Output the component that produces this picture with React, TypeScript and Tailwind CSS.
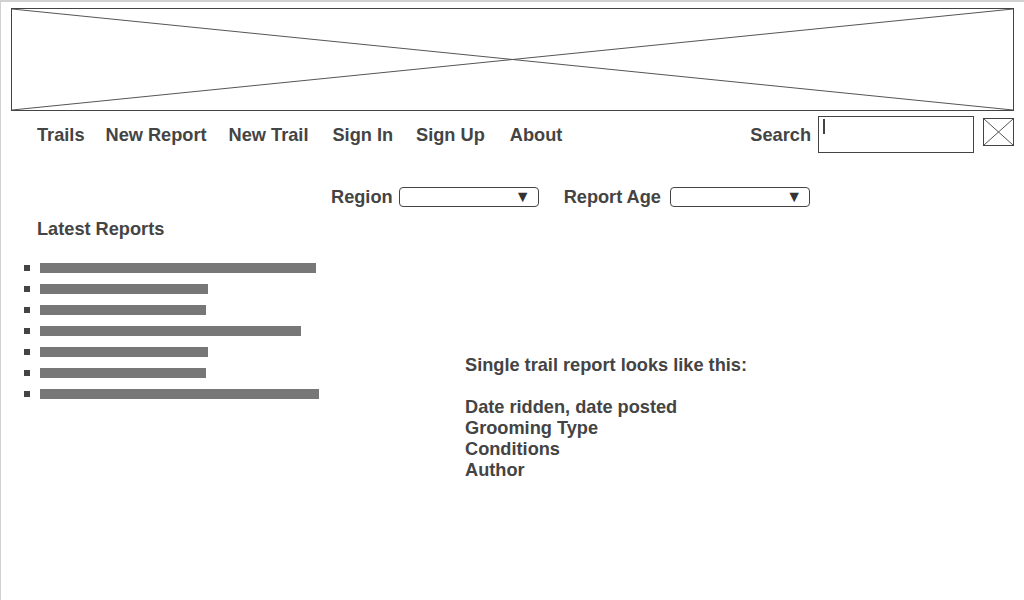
import React from "react";

const bars = [276, 168, 166, 261, 168, 166, 279];
const navItems: { label: string; ml: string }[] = [
  { label: "Trails", ml: "ml-[26px]" },
  { label: "New Report", ml: "ml-[21px]" },
  { label: "New Trail", ml: "ml-[22px]" },
  { label: "Sign In", ml: "ml-[24px]" },
  { label: "Sign Up", ml: "ml-[23px]" },
  { label: "About", ml: "ml-[25px]" },
];

function Select({ width }: { width: string }) {
  return (
    <div
      className={`${width} h-[20px] border border-[#444] rounded-[4px] bg-white flex items-center justify-end pr-[7px]`}
    >
      <span className="text-[16px] leading-none text-[#333]">▼</span>
    </div>
  );
}

export default function App() {
  return (
    <div
      className="w-[1024px] h-[600px] bg-white border-t-2 border-l border-[#d0d0d0] text-[#444] overflow-hidden"
      style={{ fontFamily: '"Liberation Sans", Arial, sans-serif' }}
    >
      {/* Placeholder banner */}
      <div className="ml-[10px] mt-[6px] w-[1003px] h-[103px] border border-[#444]">
        <svg width="100%" height="100%" viewBox="0 0 1001 101" preserveAspectRatio="none">
          <line x1="0" y1="0" x2="1001" y2="101" stroke="#555" strokeWidth="1" />
          <line x1="1001" y1="0" x2="0" y2="101" stroke="#555" strokeWidth="1" />
        </svg>
      </div>

      {/* Nav row */}
      <div className="ml-[10px] mt-[5px] w-[1003px] h-[37px] flex items-center text-[18.2px] font-bold leading-[21px]">
        {navItems.map((n) => (
          <span key={n.label} className={`${n.ml} mt-[1px]`}>
            {n.label}
          </span>
        ))}
        <div className="flex-1" />
        <span className="mr-[7px] mt-[1px]">Search</span>
        <div className="w-[156px] h-[37px] border border-[#444] bg-white pl-[4px] pt-[2px]">
          <div className="w-[2px] h-[15px] bg-[#444]" />
        </div>
        <div className="ml-[9px] self-start mt-[2px] w-[31px] h-[28px] border border-[#444]">
          <svg width="100%" height="100%" viewBox="0 0 29 26" preserveAspectRatio="none">
            <line x1="0" y1="0" x2="29" y2="26" stroke="#555" strokeWidth="1" />
            <line x1="29" y1="0" x2="0" y2="26" stroke="#555" strokeWidth="1" />
          </svg>
        </div>
      </div>

      {/* Filters row */}
      <div className="mt-[34px] pl-[330px] h-[20px] flex items-center text-[18.2px] font-bold leading-[21px]">
        <span className="mr-[6px]">Region</span>
        <Select width="w-[140px]" />
        <span className="ml-[25px] mr-[9px]">Report Age</span>
        <Select width="w-[140px]" />
      </div>

      {/* Content */}
      <div className="mt-[11px] flex">
        <div className="w-[464px]">
          <div className="pt-[1px] pl-[36px] text-[18.2px] font-bold leading-[21px]">Latest Reports</div>
          <ul className="mt-[17px]">
            {bars.map((w, i) => (
              <li key={i} className="h-[21px] flex items-center">
                <span className="ml-[23px] w-[6px] h-[6px] bg-[#444]" />
                <span className="ml-[10px] h-[10px] bg-[#777]" style={{ width: w }} />
              </li>
            ))}
          </ul>
        </div>
        <div className="pt-[137px] text-[18.2px] font-bold leading-[21px]">
          <div>Single trail report looks like this:</div>
          <div className="h-[21px]" />
          <div>Date ridden, date posted</div>
          <div>Grooming Type</div>
          <div>Conditions</div>
          <div>Author</div>
        </div>
      </div>
    </div>
  );
}
